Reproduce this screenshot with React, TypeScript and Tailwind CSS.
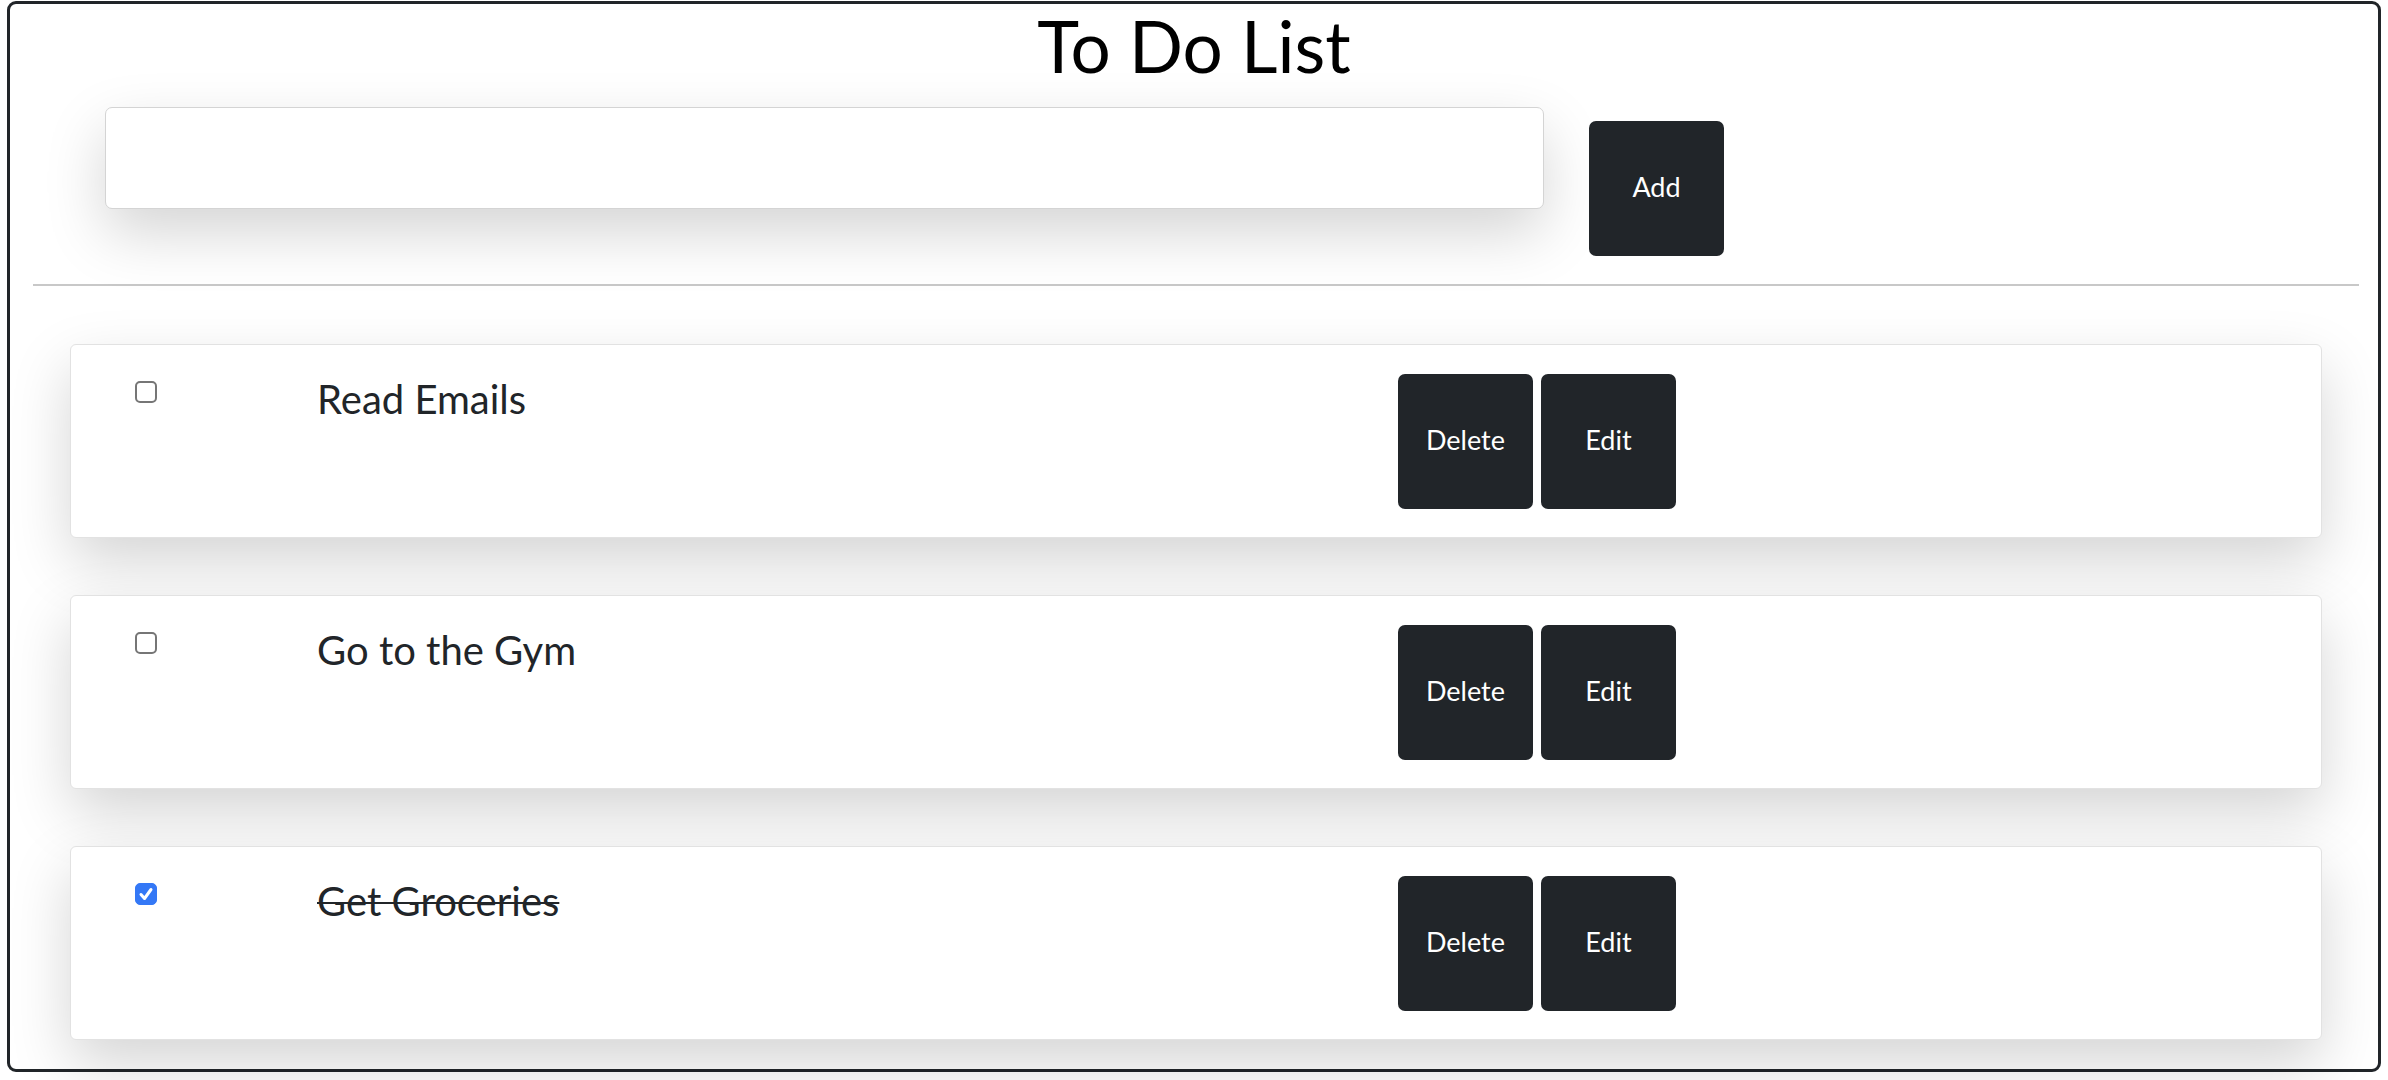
import { useState } from "react"

type Todo = { id: number; text: string; done: boolean }

const initial: Todo[] = [
  { id: 1, text: "Read Emails", done: false },
  { id: 2, text: "Go to the Gym", done: false },
  { id: 3, text: "Get Groceries", done: true },
]

function TodoCard({ todo, onToggle }: { todo: Todo; onToggle: () => void }) {
  return (
    <div className="flex items-start h-[194px] bg-white border border-[#e2e2e2] rounded-[6px] shadow-[0_24px_60px_rgba(0,0,0,0.17)]">
      <div className="w-[246px] pl-[64px] pt-[36px]">
        <label className="relative block w-[22px] h-[22px]">
          <input
            type="checkbox"
            checked={todo.done}
            onChange={onToggle}
            className={
              todo.done
                ? "appearance-none block w-[22px] h-[22px] rounded-[5px] bg-[#3478f6] border border-[#3478f6]"
                : "appearance-none block w-[22px] h-[22px] rounded-[5px] bg-white border-2 border-[#767676]"
            }
          />
          {todo.done && (
            <svg
              viewBox="0 0 22 22"
              className="absolute inset-0 w-[22px] h-[22px] pointer-events-none"
            >
              <path
                d="M6 11.5 L9.5 15.5 L16 6.5"
                fill="none"
                stroke="#fff"
                strokeWidth="3"
                strokeLinecap="round"
                strokeLinejoin="round"
              />
            </svg>
          )}
        </label>
      </div>
      <div
        className={
          todo.done
            ? "w-[1081px] pt-[34px] text-[40px] leading-none text-[#212529] line-through decoration-2"
            : "w-[1081px] pt-[34px] text-[40px] leading-none text-[#212529]"
        }
      >
        {todo.text}
      </div>
      <div className="flex gap-[8px] pt-[29px]">
        <button className="w-[135px] h-[135px] rounded-[7px] bg-[#212529] text-white text-[27px] pb-[2px] flex items-center justify-center">
          Delete
        </button>
        <button className="w-[135px] h-[135px] rounded-[7px] bg-[#212529] text-white text-[27px] pb-[2px] flex items-center justify-center">
          Edit
        </button>
      </div>
    </div>
  )
}

export default function App() {
  const [todos, setTodos] = useState(initial)
  const [value, setValue] = useState("")

  const toggle = (id: number) =>
    setTodos(todos.map((t) => (t.id === id ? { ...t, done: !t.done } : t)))

  return (
    <div className="w-full h-[1080px] bg-white px-[7px] pt-[1px] font-['Lato',sans-serif]">
      <div className="h-[1071px] border-[3px] border-[#212529] rounded-[9px]">
        <h1 className="mt-[6px] text-center text-[71px] leading-none font-normal text-black">
          To Do List
        </h1>

        <div className="flex items-start mt-[26px] pl-[95px]">
          <input
            type="text"
            value={value}
            onChange={(e) => setValue(e.target.value)}
            className="w-[1439px] h-[102px] bg-white border border-[#d4d4d4] rounded-[7px] shadow-[0_24px_60px_rgba(0,0,0,0.17)] outline-none px-4 text-[27px]"
          />
          <button className="ml-[45px] mt-[14px] w-[135px] h-[135px] rounded-[7px] bg-[#212529] text-white text-[27px] pb-[2px] flex items-center justify-center">
            Add
          </button>
        </div>

        <hr className="mt-[28px] ml-[23px] w-[2326px] border-t-2 border-[#c8c8c8]" />

        <div className="mt-[58px] ml-[60px] w-[2252px] flex flex-col gap-[57px]">
          {todos.map((t) => (
            <TodoCard key={t.id} todo={t} onToggle={() => toggle(t.id)} />
          ))}
        </div>
      </div>
    </div>
  )
}
